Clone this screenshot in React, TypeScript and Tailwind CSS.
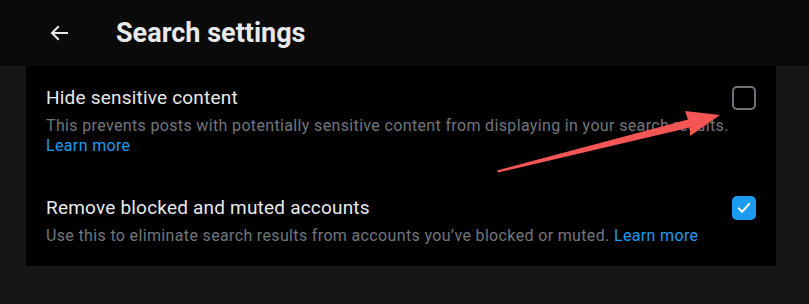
export default function App() {
  return (
    <div
      className="relative h-[304px] w-[809px] overflow-hidden bg-[#161616] text-[#e7e9ea]"
      style={{ fontFamily: "Roboto, 'Segoe UI', Arial, sans-serif" }}
    >
      {/* Header */}
      <header className="flex h-[66px] items-center bg-[#0a0a0a]">
        <button className="ml-[47px] flex h-6 w-6 items-center justify-center text-[#e7e9ea]">
          <svg viewBox="0 0 24 24" className="h-6 w-6" fill="currentColor">
            <path d="M7.414 13l5.043 5.04-1.414 1.42L3.586 12l7.457-7.46 1.414 1.42L7.414 11H21v2H7.414z" />
          </svg>
        </button>
        <h1 className="ml-[45px] text-[27px] font-bold leading-8">Search settings</h1>
      </header>

      {/* Panel */}
      <div className="mx-[26px] w-[750px] bg-black">
        <div className="flex justify-between px-5 py-5">
          <div>
            <div className="text-[19px] leading-6 tracking-[0.2px]">Hide sensitive content</div>
            <p className="mt-[6px] text-[16px] leading-5 tracking-[0.35px] text-[#71767b]">
              This prevents posts with potentially sensitive content from displaying in your search results.
              <br />
              <span className="text-[#1d9bf0]">Learn more</span>
            </p>
          </div>
          <div className="h-6 w-6 shrink-0 rounded-[5px] border-2 border-[#6e7378]" />
        </div>

        <div className="flex justify-between px-5 py-5">
          <div>
            <div className="text-[19px] leading-6 tracking-[0.2px]">Remove blocked and muted accounts</div>
            <p className="mt-[6px] text-[16px] leading-5 tracking-[0.35px] text-[#71767b]">
              Use this to eliminate search results from accounts you’ve blocked or muted.{" "}
              <span className="text-[#1d9bf0]">Learn more</span>
            </p>
          </div>
          <div className="flex h-6 w-6 shrink-0 items-center justify-center rounded-[5px] bg-[#1d9bf0]">
            <svg viewBox="0 0 24 24" className="h-[18px] w-[18px]" fill="none" stroke="white" strokeWidth="2.6" strokeLinecap="round" strokeLinejoin="round">
              <path d="M5 12.5l4.5 4.5L19 6.5" />
            </svg>
          </div>
        </div>
      </div>

      {/* Annotation arrow */}
      <svg className="pointer-events-none absolute left-0 top-0" width="809" height="304" viewBox="0 0 809 304">
        <polygon
          points="720,115 685,111 688,119.5 497,170.5 498,172.5 690,127.5 690,136"
          fill="#f45656"
        />
      </svg>
    </div>
  );
}
